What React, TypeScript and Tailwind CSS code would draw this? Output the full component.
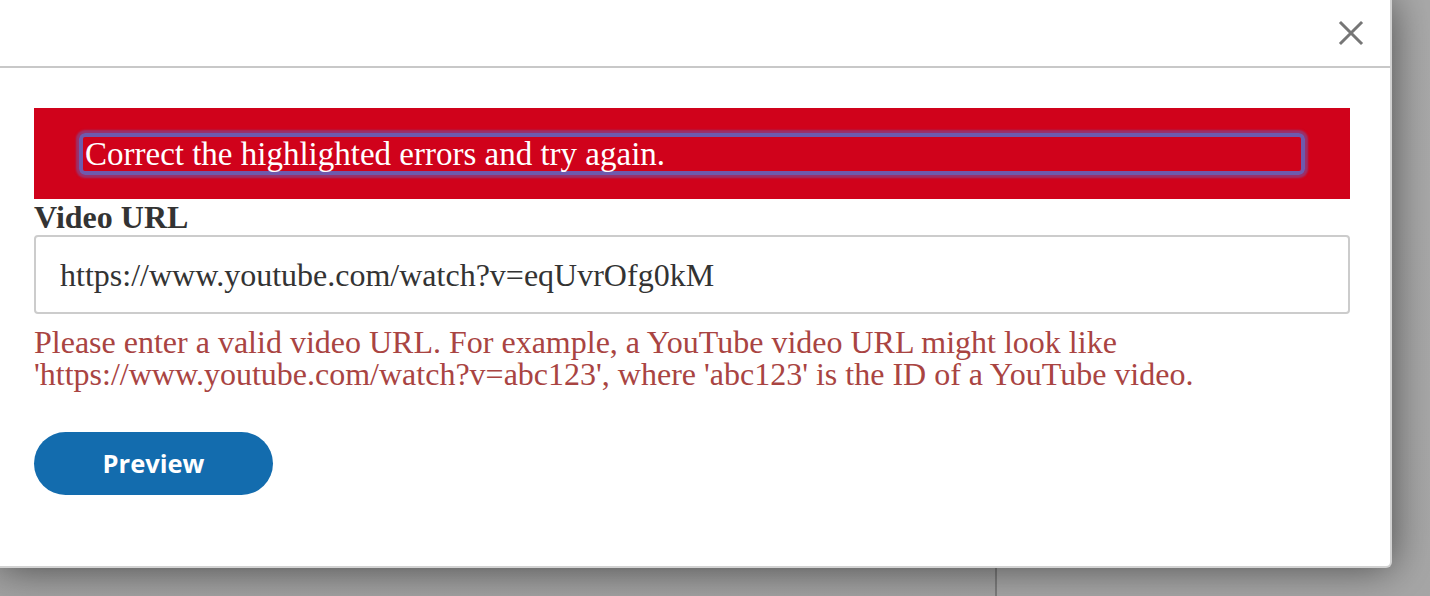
import * as React from "react"

const serif = "font-['Liberation_Serif','Times_New_Roman',serif]"

function CloseIcon() {
  return (
    <svg width="26" height="26" viewBox="0 0 26 26" className="text-[#767676]">
      <path d="M3 3 L23 23 M23 3 L3 23" stroke="currentColor" strokeWidth="3" strokeLinecap="square" />
    </svg>
  )
}

export default function App() {
  return (
    <div className="relative h-[596px] w-[1430px] overflow-hidden bg-[#a9a9a9]">
      {/* page behind the dialog */}
      <div className="flex h-full w-full">
        <div className="h-full w-[995px] bg-gradient-to-b from-[#8c8c8c] via-[#8c8c8c] to-[#a2a2a2]" />
        <div className="h-full w-[2px] bg-[#7c7c7c]" />
        <div className="h-full flex-1 bg-gradient-to-b from-[#a9a9a9] to-[#a6a6a6]" />
      </div>

      {/* dialog */}
      <div className="absolute left-0 top-0 h-[568px] w-[1392px] rounded-br-[6px] border-b-2 border-r-2 border-[#d2d2d2] bg-white shadow-[0_0_40px_rgba(0,0,0,0.55)]">
        <div className="flex h-[66px] items-center justify-end pr-[24px]">
          <button className="flex h-[30px] w-[30px] items-center justify-center">
            <CloseIcon />
          </button>
        </div>
        <div className="h-[2px] w-full bg-[#c8c8c8]" />

        <div className={`pl-[34px] pr-[40px] pt-[40px] ${serif}`}>
          <div className="flex h-[91px] items-center bg-[#d0021b] px-[45px]">
            <div className="flex h-[42px] w-full items-center rounded-[6px] border-[4px] border-[#6e5aad] pl-[2px] text-[33px] leading-[34px] text-white shadow-[0_0_2px_3px_rgba(110,90,173,0.55)]">
              Correct the highlighted errors and try again.
            </div>
          </div>

          <label className="block text-[32px] font-bold leading-[36px] text-[#333]">Video URL</label>

          <div className="flex h-[79px] items-center rounded-[4px] border-2 border-[#cccccc] pl-[24px] text-[32px] text-[#333]">
            https://www.youtube.com/watch?v=eqUvrOfg0kM
          </div>

          <p className="mt-[12px] text-[32px] leading-[32px] text-[#a94442]">
            Please enter a valid video URL. For example, a YouTube video URL might look like
            <br />
            'https://www.youtube.com/watch?v=abc123', where 'abc123' is the ID of a YouTube video.
          </p>

          <button className="mt-[42px] flex h-[63px] w-[239px] items-center justify-center rounded-full bg-[#136cae] font-['Open_Sans',sans-serif] text-[25.5px] font-bold text-white">
            Preview
          </button>
        </div>
      </div>
    </div>
  )
}
